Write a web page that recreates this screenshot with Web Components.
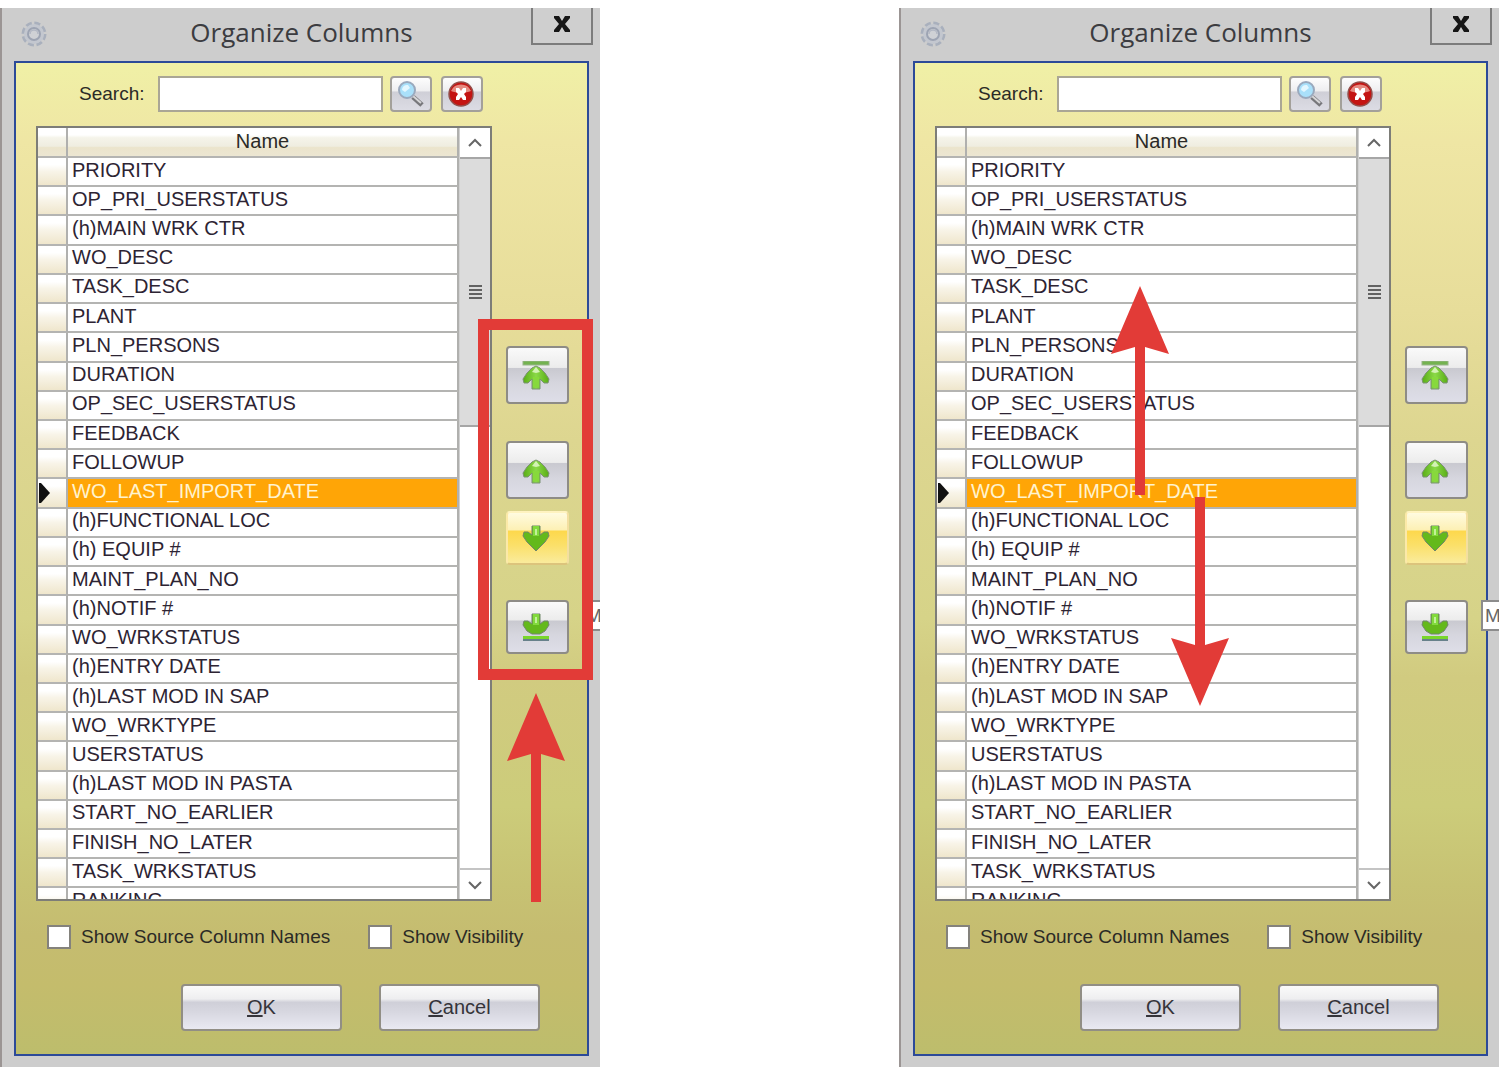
<!DOCTYPE html>
<html lang="en">
<head>
<meta charset="utf-8">
<title>Organize Columns</title>
<style>
  body {
    margin: 0;
    padding: 8px 7px 0 0;
    background: #fff;
    font-family: "Liberation Sans", Arial, sans-serif;
    font-size: 19px;
    color: #2b2a26;
  }
  main {
    display: flex;
    align-items: flex-start;
    gap: 299px;
  }
  organize-dialog {
    flex: 1;
  }
  /* callouts lie over the dialog */
  callout-box {
    position: absolute;
    left: 476px;
    top: 311px;
    width: 115px;
    height: 361px;
  }
  callout-arrow {
    position: absolute;
    width: 58px;
  }
  .to-buttons { left: 505px; top: 685px; height: 209px; }
  .move-up { left: 210px; top: 278px; height: 209px; }
  .move-down { left: 270px; top: 489px; height: 209px; }
</style>
</head>
<body>
<main>
  <organize-dialog>
    <callout-box slot="callout"></callout-box>
    <callout-arrow slot="callout" class="to-buttons"></callout-arrow>
  </organize-dialog>
  <organize-dialog>
    <callout-arrow slot="callout" class="move-up"></callout-arrow>
    <callout-arrow slot="callout" class="move-down" down></callout-arrow>
  </organize-dialog>
</main>

<script>
const COLUMNS = [
  "PRIORITY", "OP_PRI_USERSTATUS", "(h)MAIN WRK CTR", "WO_DESC", "TASK_DESC",
  "PLANT", "PLN_PERSONS", "DURATION", "OP_SEC_USERSTATUS", "FEEDBACK",
  "FOLLOWUP", "WO_LAST_IMPORT_DATE", "(h)FUNCTIONAL LOC", "(h) EQUIP #",
  "MAINT_PLAN_NO", "(h)NOTIF #", "WO_WRKSTATUS", "(h)ENTRY DATE",
  "(h)LAST MOD IN SAP", "WO_WRKTYPE", "USERSTATUS", "(h)LAST MOD IN PASTA",
  "START_NO_EARLIER", "FINISH_NO_LATER", "TASK_WRKSTATUS", "RANKING"
];

const UP_ARROW = `<path d="M14 1 L18 3 L23 8 L27 14 L26 18 H22 L18 14 V24 H10 V14 L6 18 H2 L1 14 L5 8 L10 3Z" fill="url(#g)" stroke="#7b9174" stroke-width="1"/><path d="M11 12 H17 V22 H11Z" fill="#87d93c"/><path d="M10 7 L14 2 L18 7 L14 8Z" fill="#d3f2b4"/>`;
const DOWN_ARROW = `<path d="M10 1 H18 V10 L22 7 H26 L27 11 L23 17 L18 22 L14 26 L10 22 L5 17 L1 11 L2 7 H6 L10 10Z" fill="#64b91b" stroke="#71876a" stroke-width="1"/><path d="M11 1 H17 V11 H11Z" fill="#82da3c"/><path d="M13 4 H15 V10 H13Z" fill="#c2f298"/>`;

const MOVE_ICONS = {
  top: `<rect x="1" y="0" width="26" height="4" fill="#74b350" stroke="#98b48a"/><g transform="translate(0 4)">${UP_ARROW}</g>`,
  up: `<g transform="translate(0 3)">${UP_ARROW}</g>`,
  down: `<g transform="translate(0 1)">${DOWN_ARROW}</g>`,
  bottom: `<path d="M10 1 H18 V11 L22 8 H26 L27 12 L23 18 L18 21 H10 L5 18 L1 12 L2 8 H6 L10 11Z" fill="#64b91b" stroke="#71876a" stroke-width="1"/><path d="M11 1 H17 V12 H11Z" fill="#82da3c"/><path d="M13 4 H15 V10 H13Z" fill="#c2f298"/><rect x="1" y="23" width="26" height="3" fill="#79d62c"/><rect x="1" y="26" width="26" height="2" fill="#67818a"/>`
};

class MoveButton extends HTMLElement {
  constructor() {
    super();
    this.attachShadow({ mode: "open" });
  }

  connectedCallback() {
    const dir = this.getAttribute("direction");
    this.shadowRoot.innerHTML = `
      <style>
      :host {
        display: block;
        height: 58px;
      }
      button {
        display: flex;
        align-items: center;
        justify-content: center;
        box-sizing: border-box;
        width: 100%;
        height: 100%;
        padding: 0 4px 0 0;
        border: 2px solid #8e8c86;
        border-radius: 4px;
        background: linear-gradient(#fafafa 0%, #ececec 36%, #c9c9d0 38%, #d6d6de 65%, #dedee8 100%);
        cursor: pointer;
      }
      :host([hot]) button {
        border-color: #fff3c0 #f3dfa0 #dcc47c #fbe9a8;
        background: linear-gradient(#fffbe0 0%, #fdf0b4 34%, #fdd84c 36%, #fbe06a 65%, #faeb9c 100%);
      }
      </style>
      <button type="button" aria-label="Move ${dir}">
        <svg width="28" height="29" viewBox="0 0 28 29">
          <defs><linearGradient id="g" x1="0" x2="1"><stop offset="0" stop-color="#58ad14"/><stop offset=".5" stop-color="#8bd948"/><stop offset="1" stop-color="#58ad14"/></linearGradient></defs>
          ${MOVE_ICONS[dir]}
        </svg>
      </button>
    `;
  }
}
customElements.define("move-button", MoveButton);

class IconButton extends HTMLElement {
  constructor() {
    super();
    this.attachShadow({ mode: "open" });
  }

  connectedCallback() {
    this.shadowRoot.innerHTML = `
      <style>
      :host {
        display: block;
        width: 42px;
        height: 36px;
      }
      button {
        display: flex;
        align-items: center;
        justify-content: center;
        box-sizing: border-box;
        width: 100%;
        height: 100%;
        padding: 0;
        border: 2px solid #a3a09a;
        border-radius: 4px;
        background: linear-gradient(#fdfdfd 0%, #eeeef0 40%, #cfcfd7 44%, #dcdce4 100%);
        cursor: pointer;
      }
      </style>
      <button type="button" aria-label="${this.getAttribute("label")}"><slot></slot></button>
    `;
  }
}
customElements.define("icon-button", IconButton);

class ColumnGrid extends HTMLElement {
  constructor() {
    super();
    this.attachShadow({ mode: "open" });
  }

  connectedCallback() {
    const selected = this.getAttribute("selected");
    this.shadowRoot.innerHTML = `
      <style>
      :host {
        display: flex;
        box-sizing: border-box;
        height: 775px;
        border: 2px solid #7d7d78;
        background: #fff;
        font-size: 20px;
        overflow: hidden;
      }
      .rows {
        flex: 1;
        overflow: hidden;
      }
      table {
        width: 100%;
        height: 790px;
        border-collapse: separate;
        border-spacing: 0;
        table-layout: fixed;
      }
      col:first-child {
        width: 30px;
      }
      th, td {
        box-sizing: border-box;
        padding: 0 0 4px;
        border-right: 2px solid #b0b0ae;
        border-bottom: 2px solid #b4b4b2;
        line-height: 22px;
        white-space: nowrap;
      }
      thead th {
        height: 30px;
        padding-bottom: 2px;
        font-weight: normal;
        background: linear-gradient(#fff 25%, #f5f4ea 35%, #efede0 65%, #ebe4cc 70%, #ece6d2 100%);
      }
      tbody th {
        padding: 0;
        background: linear-gradient(#fff 25%, #f8f4e8 50%, #efe6cc 100%);
        text-align: left;
      }
      tbody th svg {
        display: block;
      }
      td {
        padding-left: 4px;
        color: #2d2433;
      }
      tr[aria-selected] td {
        background: #ffa506;
        color: #fff3cf;
      }
      .scroll {
        display: flex;
        flex-direction: column;
        width: 30px;
        border-left: 1px solid #d0d0d0;
      }
      .scroll button {
        display: flex;
        align-items: center;
        justify-content: center;
        height: 29px;
        padding: 0;
        border: 0;
        background: #fff;
      }
      .thumb {
        display: flex;
        align-items: center;
        justify-content: center;
        height: 266px;
        border: solid #a6a6a6;
        border-width: 2px 0;
        background: #dcdcdc;
      }
      .track {
        flex: 1;
        border-bottom: 2px solid #c4c4c4;
      }
      </style>
      <div class="rows">
        <table>
          <colgroup><col><col></colgroup>
          <thead><tr><th></th><th scope="col">Name</th></tr></thead>
          <tbody>
            ${COLUMNS.map((name) => name === selected
              ? `<tr aria-selected="true"><th><svg width="12" height="20" viewBox="0 0 12 20"><path d="M1 0 H3 L12 10 L3 20 H1Z" fill="#111"/></svg></th><td>${name}</td></tr>`
              : `<tr><th></th><td>${name}</td></tr>`).join("")}
          </tbody>
        </table>
      </div>
      <div class="scroll">
        <button type="button" aria-label="Scroll up"><svg width="14" height="10" viewBox="0 0 14 10"><path d="M1 8 L7 2 L13 8" fill="none" stroke="#666" stroke-width="2"/></svg></button>
        <div class="thumb"><svg width="13" height="16" viewBox="0 0 13 16"><path d="M0 2H13M0 6H13M0 10H13M0 14H13" stroke="#626262" stroke-width="2"/></svg></div>
        <div class="track"></div>
        <button type="button" aria-label="Scroll down"><svg width="14" height="10" viewBox="0 0 14 10"><path d="M1 2 L7 8 L13 2" fill="none" stroke="#666" stroke-width="2"/></svg></button>
      </div>
    `;
  }
}
customElements.define("column-grid", ColumnGrid);

class CalloutBox extends HTMLElement {
  constructor() {
    super();
    this.attachShadow({ mode: "open" }).innerHTML = `
      <style>
      :host {
        display: block;
        box-sizing: border-box;
        border: 11px solid #e23b37;
        pointer-events: none;
      }
      </style>
    `;
  }
}
customElements.define("callout-box", CalloutBox);

class CalloutArrow extends HTMLElement {
  constructor() {
    super();
    this.attachShadow({ mode: "open" }).innerHTML = `
      <style>
      :host {
        display: block;
        pointer-events: none;
      }
      svg {
        display: block;
        width: 100%;
        height: 100%;
      }
      :host([down]) svg {
        transform: rotate(180deg);
      }
      </style>
      <svg viewBox="0 0 58 209"><path d="M29 0 L58 68 L34 61 V209 H24 V61 L0 68Z" fill="#e23b37"/></svg>
    `;
  }
}
customElements.define("callout-arrow", CalloutArrow);

class OrganizeDialog extends HTMLElement {
  constructor() {
    super();
    this.attachShadow({ mode: "open" });
  }

  connectedCallback() {
    this.shadowRoot.innerHTML = `
      <style>
      :host {
        display: block;
        position: relative;
        box-sizing: border-box;
        min-width: 600px;
        padding: 0 11px 11px 12px;
        border-left: 2px solid #9b9594;
        background: #cdcdcd;
      }
      header {
        display: grid;
        grid-template-columns: 1fr auto 1fr;
        height: 53px;
      }
      .gear {
        margin: 12px 0 0 6px;
      }
      h1 {
        margin: 0;
        font: 26px/48px "Open Sans", "Noto Sans", sans-serif;
        color: #3c3c40;
      }
      .close {
        justify-self: end;
        box-sizing: border-box;
        width: 62px;
        height: 37px;
        margin-right: -4px;
        padding: 0;
        border: 2px solid #7c7c7c;
        border-top: 0;
        background: #cfcfcf;
      }
      .panel {
        box-sizing: border-box;
        padding: 13px 18px 23px 20px;
        border: 2px solid #2c4a98;
        background: linear-gradient(#f0f0a6 0%, #efe6a4 8%, #e7dd9a 25%, #ddd690 38%, #d6d388 56%, #d1cb80 62%, #cccc7a 75%, #c7c273 83%, #c5bc70 88%, #c4bc6c 93%, #bdbd6c 100%);
      }
      .search {
        display: flex;
        align-items: center;
        gap: 9px;
        padding-left: 43px;
      }
      .search label {
        width: 70px;
      }
      .search input {
        box-sizing: border-box;
        width: 225px;
        height: 36px;
        margin-right: -2px;
        border: 2px solid #aaa695;
        background: #fff;
        font: inherit;
      }
      .body {
        display: flex;
        gap: 14px;
        margin-top: 14px;
      }
      column-grid {
        flex: 1;
      }
      .moves {
        display: flex;
        flex-direction: column;
        width: 63px;
        padding-top: 220px;
      }
      .moves move-button {
        margin-bottom: 37px;
      }
      .moves move-button:nth-child(2) {
        margin-bottom: 12px;
      }
      .moves move-button:nth-child(n + 3) {
        height: 54px;
        margin-bottom: 35px;
      }
      .options {
        display: flex;
        gap: 38px;
        margin: 24px 0 0 11px;
      }
      .options label {
        display: flex;
        align-items: center;
        gap: 10px;
      }
      .options input {
        appearance: none;
        box-sizing: border-box;
        width: 24px;
        height: 24px;
        margin: 0;
        border: 2px solid #84827c;
        background: #fff;
      }
      .actions {
        display: flex;
        justify-content: flex-end;
        gap: 37px;
        margin: 35px 29px 0 0;
      }
      .actions button {
        width: 161px;
        height: 47px;
        border: 2px solid #918e85;
        border-radius: 4px;
        background: linear-gradient(#fafafa 0%, #eeeef0 30%, #cfcfd8 38%, #d7d7e0 60%, #e9e9f2 100%);
        font: 20px "Liberation Sans", Arial, sans-serif;
        color: #35343a;
      }
      /* sliver of the tooltip that runs off the window */
      .tip {
        position: absolute;
        top: 592px;
        right: 0;
        box-sizing: border-box;
        width: 18px;
        height: 31px;
        padding-left: 2px;
        border: 2px solid #8c8c8c;
        border-right: 0;
        background: #fff;
        line-height: 28px;
        color: #666;
        overflow: hidden;
      }
      </style>
      <header>
        <svg class="gear" width="28" height="28" viewBox="0 0 28 28">
          <circle cx="14" cy="14" r="11" fill="none" stroke="#a9b0bd" stroke-width="3" stroke-dasharray="6 2.640"/>
          <circle cx="14" cy="14" r="8" fill="none" stroke="#c3c7cf" stroke-width="4"/>
          <circle cx="14" cy="14" r="6" fill="#cfd1d5" stroke="#9da4b3" stroke-width="2"/>
          <path d="M10 14 A4 4 0 0 1 18 14" fill="none" stroke="#b3b8c4" stroke-width="1.500"/>
        </svg>
        <h1>Organize Columns</h1>
        <button class="close" type="button" aria-label="Close"><svg width="18" height="16" viewBox="0 0 18 16"><path d="M1 0H6L9 5L12 0H17V2L12 8L17 14V16H12L9 11L6 16H1V14L6 8L1 2Z" fill="#161616"/></svg></button>
      </header>
      <div class="panel">
        <div class="search">
          <label for="search">Search:</label>
          <input id="search" type="text">
          <icon-button label="Search">
            <svg width="30" height="30" viewBox="0 0 30 30">
              <path d="M17 18 L26 26" stroke="#77777b" stroke-width="5"/>
              <path d="M17 17 L25 24" stroke="#d6d6d8" stroke-width="2"/>
              <circle cx="11" cy="11" r="8" fill="#a9e0fa" stroke="#9aa9bd" stroke-width="2"/>
              <path d="M6 11 A5 5 0 0 1 12 6 L14 9 L9 13Z" fill="#e3f7ff"/>
            </svg>
          </icon-button>
          <icon-button label="Clear">
            <svg width="28" height="28" viewBox="0 0 28 28">
              <circle cx="13" cy="14" r="12" fill="#c41412" stroke="#93504c" stroke-width="1.500"/>
              <path d="M3 11 A11 11 0 0 1 23 11 C18 13 8 13 3 11Z" fill="#e58a80"/>
              <path d="M8 8H11L13 11L15 8H18V12L16 14L18 17V20H15L13 17L11 20H8V17L10 14L8 12Z" fill="#fff"/>
            </svg>
          </icon-button>
        </div>
        <div class="body">
          <column-grid selected="WO_LAST_IMPORT_DATE"></column-grid>
          <div class="moves">
            <move-button direction="top"></move-button>
            <move-button direction="up"></move-button>
            <move-button direction="down" hot></move-button>
            <move-button direction="bottom"></move-button>
          </div>
        </div>
        <div class="options">
          <label><input type="checkbox">Show Source Column Names</label>
          <label><input type="checkbox">Show Visibility</label>
        </div>
        <div class="actions">
          <button type="button"><u>O</u>K</button>
          <button type="button"><u>C</u>ancel</button>
        </div>
      </div>
      <div class="tip">M</div>
      <slot name="callout"></slot>
    `;
  }
}
customElements.define("organize-dialog", OrganizeDialog);
</script>
</body>
</html>
